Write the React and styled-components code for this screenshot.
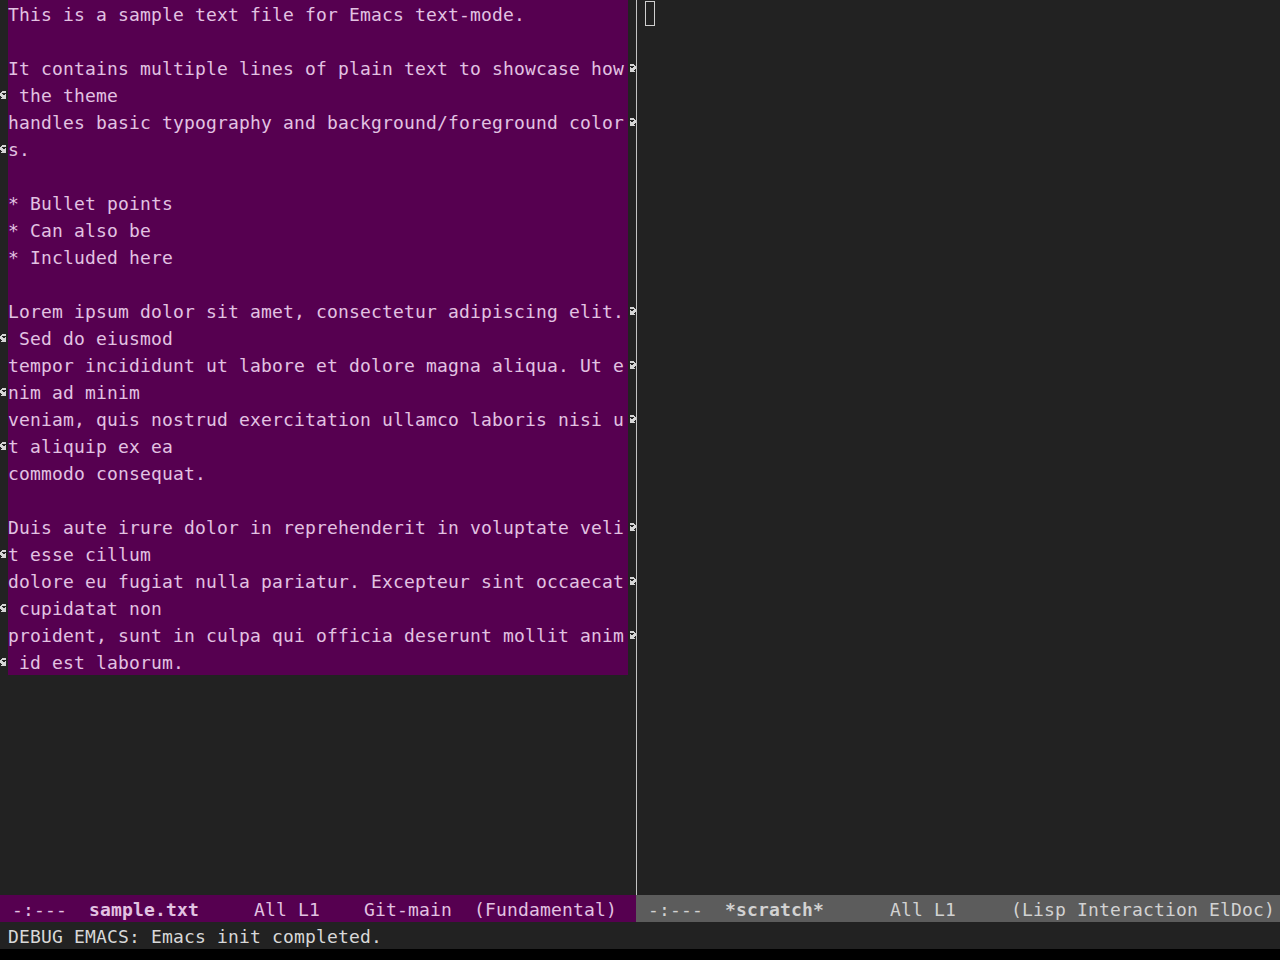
import React from 'react';
import styled, { createGlobalStyle } from 'styled-components';

const COLS = 56;

const source = [
  'This is a sample text file for Emacs text-mode.',
  '',
  'It contains multiple lines of plain text to showcase how the theme',
  'handles basic typography and background/foreground colors.',
  '',
  '* Bullet points',
  '* Can also be',
  '* Included here',
  '',
  'Lorem ipsum dolor sit amet, consectetur adipiscing elit. Sed do eiusmod',
  'tempor incididunt ut labore et dolore magna aliqua. Ut enim ad minim',
  'veniam, quis nostrud exercitation ullamco laboris nisi ut aliquip ex ea',
  'commodo consequat.',
  '',
  'Duis aute irure dolor in reprehenderit in voluptate velit esse cillum',
  'dolore eu fugiat nulla pariatur. Excepteur sint occaecat cupidatat non',
  'proident, sunt in culpa qui officia deserunt mollit anim id est laborum.',
];

// split logical lines into screen rows, the way visual continuation does
const wrapLines = (lines) => {
  const rows = [];
  lines.forEach((line) => {
    if (line.length <= COLS) {
      rows.push({ text: line, cont: false, wrapped: false });
      return;
    }
    for (let i = 0; i < line.length; i += COLS) {
      rows.push({
        text: line.slice(i, i + COLS),
        cont: i + COLS < line.length,
        wrapped: i > 0,
      });
    }
  });
  return rows;
};

const GlobalStyle = createGlobalStyle`
  html, body {
    margin: 0;
    padding: 0;
    background: #000;
  }
  * {
    box-sizing: border-box;
  }
`;

const Frame = styled.div`
  width: 1280px;
  height: 949px;
  display: flex;
  flex-direction: column;
  background: #222222;
  font-family: 'DejaVu Sans Mono', 'Liberation Mono', monospace;
  font-size: 18px;
  letter-spacing: 0.164px;
  line-height: 27px;
  overflow: hidden;
`;

const Windows = styled.div`
  display: flex;
  height: 922px;
`;

const Window = styled.div`
  display: flex;
  flex-direction: column;
  width: ${(p) => p.$width}px;
  flex-shrink: 0;
`;

const Body = styled.div`
  height: 895px;
  display: flex;
  flex-direction: column;
  border-left: ${(p) => (p.$divider ? '1px solid #c4c4c4' : 'none')};
`;

const Row = styled.div`
  display: flex;
  height: 27px;
`;

const Fringe = styled.div`
  width: 8px;
  flex-shrink: 0;
  display: flex;
  align-items: center;
`;

const TextCell = styled.div`
  width: ${(p) => (p.$width ? `${p.$width}px` : 'auto')};
  flex: ${(p) => (p.$width ? 'none' : '1')};
  padding-top: 1px;
  white-space: pre;
  color: #e2c2e2;
  background: ${(p) => (p.$filled ? '#560050' : 'transparent')};
  overflow: hidden;
`;

const Cursor = styled.span`
  display: inline-block;
  width: 10px;
  height: 25px;
  border: 1.5px solid #cfcfcf;
  vertical-align: top;
`;

const ModeLine = styled.div`
  height: 27px;
  padding-top: 1px;
  white-space: pre;
  padding-left: ${(p) => p.$pad}px;
  background: ${(p) => (p.$active ? '#560050' : '#5c5c5c')};
  color: ${(p) => (p.$active ? '#e2c2e2' : '#d2d2d2')};
  overflow: hidden;
`;

const BufferName = styled.b`
  font-weight: bold;
`;

const EchoArea = styled.div`
  height: 27px;
  padding: 1px 0 0 8px;
  white-space: pre;
  color: #d8d8d8;
`;

// emacs curly arrow bitmaps, 8x8
const LEFT_CURLY = [0x3c, 0x7c, 0xc0, 0xe4, 0xfc, 0x7c, 0x3c, 0x7c];
const RIGHT_CURLY = [0x3c, 0x3e, 0x03, 0x27, 0x3f, 0x3e, 0x3c, 0x3e];

const FringeBitmap = ({ bits }) => {
  const cells = [];
  bits.forEach((row, y) => {
    for (let x = 0; x < 8; x++) {
      if (row & (0x80 >> x)) {
        cells.push(<rect key={`${x}-${y}`} x={x} y={y} width="1" height="1" />);
      }
    }
  });
  return (
    <svg width="8" height="8" viewBox="0 0 8 8" fill="#d6d6d6" shapeRendering="crispEdges">
      {cells}
    </svg>
  );
};

const TextLine = ({ row }) => (
  <Row>
    <Fringe>{row.wrapped && <FringeBitmap bits={LEFT_CURLY} />}</Fringe>
    <TextCell $width={620} $filled>
      {row.text}
    </TextCell>
    <Fringe>{row.cont && <FringeBitmap bits={RIGHT_CURLY} />}</Fringe>
  </Row>
);

const App = () => {
  const rows = wrapLines(source);
  return (
    <>
      <GlobalStyle />
      <Frame>
        <Windows>
          <Window $width={636}>
            <Body>
              {rows.map((row, i) => (
                <TextLine key={i} row={row} />
              ))}
            </Body>
            <ModeLine $active $pad={1}>
              {' -:---  '}
              <BufferName>sample.txt</BufferName>
              {'     All L1    Git-main  (Fundamental)'}
            </ModeLine>
          </Window>
          <Window $width={644}>
            <Body $divider>
              <Row>
                <Fringe />
                <TextCell>
                  <Cursor />
                </TextCell>
              </Row>
            </Body>
            <ModeLine $pad={1}>
              {' -:---  '}
              <BufferName>*scratch*</BufferName>
              {'      All L1     (Lisp Interaction ElDoc)'}
            </ModeLine>
          </Window>
        </Windows>
        <EchoArea>DEBUG EMACS: Emacs init completed.</EchoArea>
      </Frame>
    </>
  );
};

export default App;
